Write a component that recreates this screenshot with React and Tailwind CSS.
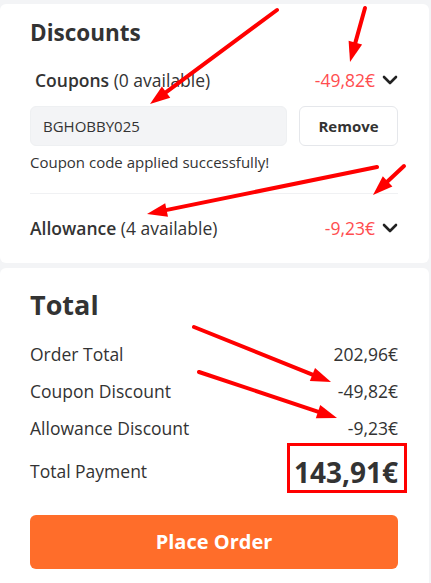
// red hand-drawn annotation arrows, [x1, y1, tipX, tipY]
const arrows = [
  [277, 10, 150, 104],
  [365, 8, 350, 62],
  [377, 167, 147, 214],
  [404, 166, 373, 195],
  [194, 327, 331, 382],
  [199, 372, 337, 418],
];

function Arrow({ x1, y1, x2, y2 }) {
  const dx = x2 - x1;
  const dy = y2 - y1;
  const len = Math.hypot(dx, dy);
  const ux = dx / len;
  const uy = dy / len;
  const head = 20;
  const half = 7;
  const bx = x2 - ux * head;
  const by = y2 - uy * head;
  const points = `${x2},${y2} ${bx - uy * half},${by + ux * half} ${bx + uy * half},${by - ux * half}`;
  return (
    <g>
      <line x1={x1} y1={y1} x2={bx + ux * 2} y2={by + uy * 2} stroke="#f00" strokeWidth="4" strokeLinecap="round" />
      <polygon points={points} fill="#f00" />
    </g>
  );
}

function Chevron() {
  return (
    <svg width="16" height="10" viewBox="0 0 16 10" fill="none">
      <path d="M2 2l6 6 6-6" stroke="#222" strokeWidth="2.6" strokeLinecap="round" strokeLinejoin="round" />
    </svg>
  );
}

function Row({ label, value, big }) {
  return (
    <div className="flex items-center justify-between">
      <span className="text-[17.5px] text-[#333]">{label}</span>
      <span className={big ? "text-[28px] font-bold leading-[38px] text-[#333]" : "text-[17.5px] text-[#333]"}>{value}</span>
    </div>
  );
}

export default function App() {
  return (
    <div
      className="relative h-[583px] overflow-hidden bg-[#f3f4f6] pt-1 pr-[2px]"
      style={{ fontFamily: '"Open Sans", sans-serif' }}
    >
      {/* DISCOUNTS */}
      <section className="rounded-md bg-white pl-[30px] pr-[31px] pt-[13px]">
        <h2 className="text-[22.5px] font-bold leading-8 text-[#333]">Discounts</h2>

        <div className="mt-[18px] flex items-center justify-between pl-[5px]">
          <span className="text-[17.5px] text-[#333]">
            <span className="font-semibold">Coupons</span> (0 available)
          </span>
          <span className="flex items-center gap-[7px] text-[17.5px] text-[#ff4d4f]">
            -49,82€
            <Chevron />
          </span>
        </div>

        <div className="mt-[13px] flex gap-3">
          <div className="flex h-[40px] flex-1 items-center rounded-md border border-[#eef0f2] bg-[#f3f4f6] px-[12px] text-[15px] text-[#333]">
            BGHOBBY025
          </div>
          <button className="h-[40px] w-[99px] rounded-md border border-[#e5e7eb] bg-white text-[15px] font-bold text-[#333]">
            Remove
          </button>
        </div>

        <p className="mt-[5px] text-[15px] text-[#333]">Coupon code applied successfully!</p>

        <div className="mt-[19px] border-t border-[#f0f1f3]" />

        <div className="flex h-[69px] items-center justify-between">
          <span className="text-[17.5px] text-[#333]">
            <span className="font-semibold">Allowance</span> (4 available)
          </span>
          <span className="flex items-center gap-[7px] text-[17.5px] text-[#ff4d4f]">
            -9,23€
            <Chevron />
          </span>
        </div>
      </section>

      {/* TOTAL */}
      <section className="mt-[5px] rounded-md bg-white pb-6 pl-[30px] pr-[31px] pt-[19px]">
        <h2 className="text-[27px] font-bold leading-9 text-[#333]">Total</h2>
        <div className="mt-[18px] flex flex-col gap-[11px]">
          <Row label="Order Total" value="202,96€" />
          <Row label="Coupon Discount" value="-49,82€" />
          <Row label="Allowance Discount" value="-9,23€" />
          <Row label="Total Payment" value="143,91€" big />
        </div>
        <button className="mt-[24px] h-[54px] w-full rounded-md bg-[#ff6d2a] text-[20px] font-bold text-white">
          Place Order
        </button>
      </section>

      {/* annotations */}
      <div className="pointer-events-none absolute left-[287px] top-[443px] h-[50px] w-[120px] border-[3px] border-[#f00]" />
      <svg className="pointer-events-none absolute inset-0" width="431" height="583">
        {arrows.map(([x1, y1, x2, y2], i) => (
          <Arrow key={i} x1={x1} y1={y1} x2={x2} y2={y2} />
        ))}
      </svg>
    </div>
  );
}
